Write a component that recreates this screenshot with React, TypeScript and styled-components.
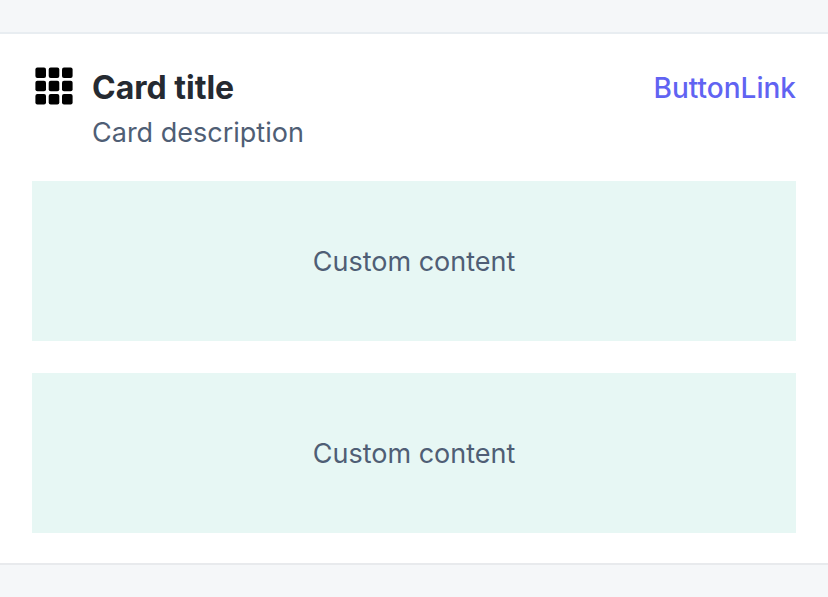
import React from "react";
import styled, { createGlobalStyle } from "styled-components";

const GlobalStyle = createGlobalStyle`
  * { box-sizing: border-box; }
  body {
    margin: 0;
    background: #f5f7f9;
    font-family: Inter, "Liberation Sans", sans-serif;
    color: #4f5e75;
  }
`;

const Page = styled.main`
  padding: 32px 0;
`;

const Card = styled.section`
  display: flex;
  flex-direction: column;
  gap: 27px;
  padding: 30px 32px;
  background: #ffffff;
  border-top: 2px solid #e8edf1;
  border-bottom: 2px solid #e8eaed;
`;

const Header = styled.header`
  display: flex;
  align-items: flex-start;
  gap: 16px;
`;

const GridIcon = styled.svg`
  flex: none;
  width: 44px;
  height: 44px;
`;

const Heading = styled.div`
  flex: 1;
  min-width: 0;
`;

const Title = styled.h2`
  margin: 0;
  font-size: 32px;
  line-height: 48px;
  font-weight: 700;
  color: #252a31;
`;

const Description = styled.p`
  margin: 0;
  font-size: 27px;
  line-height: 42px;
`;

const ButtonLink = styled.button`
  flex: none;
  padding: 0;
  border: 0;
  background: none;
  font-family: inherit;
  font-size: 28px;
  font-weight: 500;
  line-height: 48px;
  color: #6163f2;
  cursor: pointer;
`;

const Body = styled.div`
  display: grid;
  gap: 32px;
`;

const Content = styled.div`
  display: flex;
  align-items: center;
  justify-content: center;
  min-height: 160px;
  padding-top: 2px;
  background: #e7f7f4;
  font-size: 27px;
  line-height: 40px;
`;

const cells = [3.4, 16.7, 30];

export default function App() {
  return (
    <>
      <GlobalStyle />
      <Page>
        <Card>
          <Header>
            <GridIcon viewBox="0 0 44 44" aria-hidden="true">
              {cells.map((y) =>
                cells.map((x) => (
                  <rect key={`${x}-${y}`} x={x} y={y} width="10.6" height="10.6" rx="2" />
                ))
              )}
            </GridIcon>
            <Heading>
              <Title>Card title</Title>
              <Description>Card description</Description>
            </Heading>
            <ButtonLink type="button">ButtonLink</ButtonLink>
          </Header>
          <Body>
            <Content>Custom content</Content>
            <Content>Custom content</Content>
          </Body>
        </Card>
      </Page>
    </>
  );
}
